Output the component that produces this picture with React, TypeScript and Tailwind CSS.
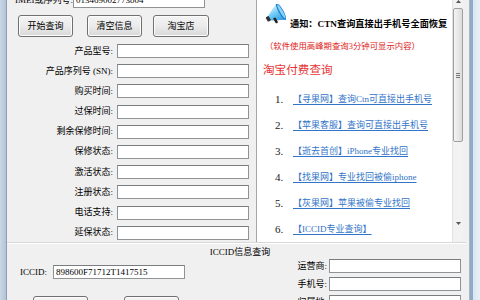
import React from 'react';

const fields = [
  '产品型号:',
  '产品序列号 (SN):',
  '购买时间:',
  '过保时间:',
  '剩余保修时间:',
  '保修状态:',
  '激活状态:',
  '注册状态:',
  '电话支持:',
  '延保状态:',
];

const links = [
  '【寻果网】查询Ctn可直接出手机号',
  '【苹果客服】查询可直接出手机号',
  '【逝去首创】iPhone专业找回',
  '【找果网】专业找回被偷iphone',
  '【灰果网】苹果被偷专业找回',
  '【ICCID专业查询】',
];

const inputCls = 'bg-white border border-[#8f9396] border-t-[#7a7d80] box-border';
const btnCls =
  'h-[22px] rounded-[3px] border border-[#707070] bg-gradient-to-b from-[#f4f4f4] via-[#ebebeb] to-[#d8d8d8] shadow-[inset_0_0_0_1px_#fcfcfc] flex items-center justify-center text-[9px]';

function Megaphone() {
  return (
    <svg width="23" height="21" viewBox="0 0 23 21">
      <defs>
        <linearGradient id="cone" x1="0" y1="0" x2="0" y2="1">
          <stop offset="0" stopColor="#d8f2ff" />
          <stop offset="0.45" stopColor="#6cc8f6" />
          <stop offset="1" stopColor="#2a93dc" />
        </linearGradient>
      </defs>
      <g transform="rotate(-30 12 11)">
        <rect x="2.5" y="8.5" width="4" height="5" rx="1" fill="#333" />
        <polygon points="6,8 19,1.5 19,20.5 6,14" fill="url(#cone)" />
        <ellipse cx="19" cy="11" rx="2.4" ry="9.5" fill="#1f7fcc" />
        <ellipse cx="19.3" cy="11" rx="1.4" ry="8" fill="#8ad6fb" />
        <rect x="8.5" y="13" width="2.6" height="6" rx="1" fill="#222" />
      </g>
    </svg>
  );
}

export default function App() {
  return (
    <div className="w-[480px] h-[300px] overflow-hidden flex text-[9px] text-black font-['Liberation_Serif','Noto_Sans_CJK_SC',serif] leading-none">
      {/* left window frame */}
      <div className="w-[7px] h-full bg-gradient-to-r from-[#c9d7e6] to-[#b3c4d6] border-r border-[#8d9fb3]" />

      {/* client area */}
      <div className="w-[459px] h-full bg-[#f0f0f0] flex flex-col">
        <div className="-mt-[9px] h-[251px] flex shrink-0">
          {/* left column */}
          <div className="w-[249px] flex flex-col pt-[1px]">
            <div className="flex items-center h-[16px] pl-[8px]">
              <span className="w-[58px]">IMEI或序列号:</span>
              <div className={`${inputCls} w-[132px] h-[16px] flex items-center pl-[2px]`}>013469002773804</div>
            </div>

            <div className="flex mt-[7px] pl-[11px]">
              <div className={`${btnCls} w-[55px]`}>开始查询</div>
              <div className={`${btnCls} w-[55px] ml-[14px]`}>清空信息</div>
              <div className={`${btnCls} w-[56px] ml-[11px]`}>淘宝店</div>
            </div>

            <div className="flex flex-col gap-[6.2px] mt-[7px]">
              {fields.map((f) => (
                <div key={f} className="flex items-center h-[14px]">
                  <span className="w-[106px] text-right">{f}</span>
                  <div className={`${inputCls} w-[132px] h-[14px] ml-[4px]`} />
                </div>
              ))}
            </div>
          </div>

          {/* notice panel */}
          <div className="w-[207px] h-full bg-white border-l border-[#a6a6a6] flex">
            <div className="w-[195px] flex flex-col">
              <div className="flex items-start pt-[13px] pl-[6px]">
                <Megaphone />
                <span className="ml-[4px] mt-[15px] leading-[11px] text-[9.2px] font-bold whitespace-nowrap">
                  通知：CTN查询直接出手机号全面恢复
                </span>
              </div>
              <div className="mt-[11px] pl-[8px] leading-[11px] text-[8.4px] text-[#e02020] whitespace-nowrap">
                （软件使用高峰期查询3分钟可显示内容）
              </div>
              <div className="mt-[12px] pl-[6px] leading-[14px] text-[11.6px] text-[#e63434] whitespace-nowrap">
                淘宝付费查询
              </div>
              <div className="mt-[15px] flex flex-col gap-[14px]">
                {links.map((l, i) => (
                  <div key={l} className="flex items-center h-[12px] pl-[18px]">
                    <span className="w-[18px] text-[11px] text-[#222]">{i + 1}.</span>
                    <span className="text-[9px] text-[#3274c8] underline underline-offset-[2px] whitespace-nowrap">{l}</span>
                  </div>
                ))}
              </div>
            </div>

            {/* scrollbar */}
            <div className="w-[11px] h-full bg-[#f2f2f2] border-l border-[#e2e2e2] flex flex-col items-center">
              <div className="h-[12px] w-full flex items-end justify-center">
                <svg width="5" height="3" viewBox="0 0 5 3">
                  <polygon points="0,3 2.5,0 5,3" fill="#555" />
                </svg>
              </div>
              <div className="mt-[5px] w-[10px] h-[134px] rounded-[2px] border border-[#a0a0a0] bg-gradient-to-r from-[#f4f4f4] to-[#dcdcdc] flex flex-col items-center justify-center gap-[1px]">
                <div className="w-[4px] h-px bg-[#777]" />
                <div className="w-[4px] h-px bg-[#777]" />
                <div className="w-[4px] h-px bg-[#777]" />
              </div>
              <div className="flex-1" />
              <div className="h-[20px] w-full flex items-start justify-center">
                <svg width="5" height="3" viewBox="0 0 5 3">
                  <polygon points="0,0 2.5,3 5,0" fill="#555" />
                </svg>
              </div>
            </div>
          </div>
        </div>

        {/* ICCID section */}
        <div className="flex-1 border-t border-[#d8d8d8] shadow-[inset_0_1px_0_#ffffff] flex flex-col">
          <div className="mt-[2px] leading-[14px] text-center pl-[7px]">ICCID信息查询</div>
          <div className="flex">
            <div className="w-[240px] flex flex-col">
              <div className="flex items-center h-[14px] mt-[6px] pl-[13px]">
                <span className="w-[33px]">ICCID:</span>
                <div className={`${inputCls} w-[132px] h-[14px] flex items-center pl-[2px]`}>898600F71712T1417515</div>
              </div>
              <div className="flex mt-[17px] pl-[26px]">
                <div className={`${btnCls} w-[55px]`}>查询</div>
                <div className={`${btnCls} w-[55px] ml-[36px]`}>清空</div>
              </div>
            </div>
            <div className="flex flex-col gap-[4px]">
              {['运营商:', '手机号:', '归属地:'].map((f) => (
                <div key={f} className="flex items-center h-[14px]">
                  <span className="w-[80px] text-right">{f}</span>
                  <div className={`${inputCls} w-[132px] h-[14px] ml-[2px]`} />
                </div>
              ))}
            </div>
          </div>
        </div>
      </div>

      {/* right window frame */}
      <div className="w-[14px] h-full flex">
        <div className="w-[4px] h-full bg-[#f0f0f0] border-r border-[#a9b8c8]" />
        <div className="w-[3px] h-full bg-[#8fabc7]" />
        <div className="flex-1 h-full bg-gradient-to-r from-[#dbe6f1] to-[#e9eff6]" />
      </div>
    </div>
  );
}
